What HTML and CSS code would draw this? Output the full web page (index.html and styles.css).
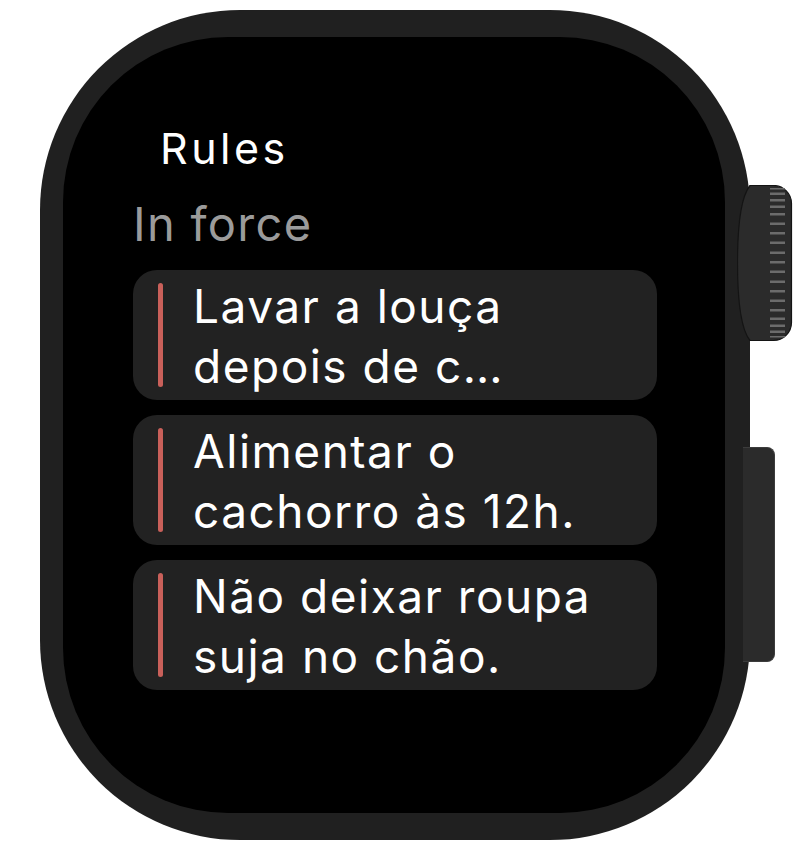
FILE: index.html
```html
<!DOCTYPE html>
<html lang="pt">
<head>
<meta charset="utf-8">
<title>Rules</title>
<link rel="stylesheet" href="styles.css">
</head>
<body>
<div class="watch">
  <div class="screen">
    <div class="title">Rules</div>
    <div class="section">In force</div>
    <div class="list">
      <div class="card"><span class="bar"></span><p class="text">Lavar a louça depois de c…</p></div>
      <div class="card"><span class="bar"></span><p class="text">Alimentar o cachorro às 12h.</p></div>
      <div class="card"><span class="bar"></span><p class="text">Não deixar roupa suja no chão.</p></div>
    </div>
  </div>
  <svg class="crown" width="56" height="157" viewBox="0 0 56 157">
    <path d="M13 0.5 H36 A18 18 0 0 1 54.5 18.5 V137.5 A18 18 0 0 1 36 155.5 H13 Q0.5 140 0.5 78 Q0.5 16 13 0.5 Z" fill="#2b2b2b" stroke="#141414" stroke-width="1.2"/>
    <g fill="#6c6c6c">
      <rect x="33" y="3" width="15" height="1.5"/>
      <rect x="33" y="7.5" width="15" height="2.5"/>
      <rect x="33" y="14" width="15" height="2.5"/>
      <rect x="33" y="20.5" width="15" height="2.5"/>
      <rect x="33" y="28" width="15" height="2.5"/>
      <rect x="33" y="37.5" width="15" height="2.5"/>
      <rect x="33" y="47" width="15" height="2.5"/>
      <rect x="33" y="56.5" width="15" height="2.5"/>
      <rect x="33" y="66.5" width="15" height="2.5"/>
      <rect x="33" y="76" width="15" height="2.5"/>
      <rect x="33" y="85.5" width="15" height="2.5"/>
      <rect x="33" y="95.5" width="15" height="2.5"/>
      <rect x="33" y="105" width="15" height="2.5"/>
      <rect x="33" y="114.5" width="15" height="2.5"/>
      <rect x="33" y="124" width="15" height="2.5"/>
      <rect x="33" y="132.5" width="15" height="2.5"/>
      <rect x="33" y="139.5" width="15" height="2.5"/>
      <rect x="33" y="145.5" width="15" height="2.5"/>
      <rect x="33" y="151" width="15" height="1.5"/>
    </g>
  </svg>
  <div class="button"></div>
</div>
</body>
</html>
```
FILE: styles.css
```css
html, body {
  margin: 0;
  padding: 0;
  background: #ffffff;
}

body {
  width: 810px;
  height: 850px;
  overflow: hidden;
  font-family: Inter, "Noto Sans", "Liberation Sans", sans-serif;
}

.watch {
  position: relative;
  box-sizing: border-box;
  width: 710px;
  height: 830px;
  margin: 10px 0 0 40px;
  padding: 27px 25px 27px 23px;
  border-radius: 200px;
  background: #202020;
}

.screen {
  box-sizing: border-box;
  width: 662px;
  height: 776px;
  border-radius: 165px;
  background: #000000;
  padding: 89px 68px 0 70px;
  display: flex;
  flex-direction: column;
}

.title {
  margin-left: 27px;
  font-size: 43px;
  line-height: 45px;
  letter-spacing: 3.5px;
  color: #ffffff;
}

.section {
  margin-top: 27px;
  font-size: 47px;
  line-height: 52px;
  letter-spacing: 1.3px;
  color: #9b9b9b;
}

.list {
  margin-top: 20px;
  display: flex;
  flex-direction: column;
  gap: 15px;
}

.card {
  display: flex;
  align-items: stretch;
  height: 130px;
  box-sizing: border-box;
  border-radius: 24px;
  background: #222222;
  padding: 0 30px 0 25px;
}

.bar {
  flex: none;
  width: 5px;
  margin: 13px 0;
  border-radius: 3px;
  background: #c9605a;
}

.text {
  margin: 6px 0 0 30px;
  font-size: 46px;
  line-height: 60px;
  letter-spacing: 1.5px;
  color: #ffffff;
}

.crown {
  position: absolute;
  left: 697px;
  top: 175px;
}

.button {
  position: absolute;
  left: 703px;
  top: 437px;
  width: 32px;
  height: 215px;
  box-sizing: border-box;
  background: #2b2b2b;
  border: 1.5px solid #3c3c3c;
  border-left: none;
  border-radius: 0 8px 8px 0;
}
```
